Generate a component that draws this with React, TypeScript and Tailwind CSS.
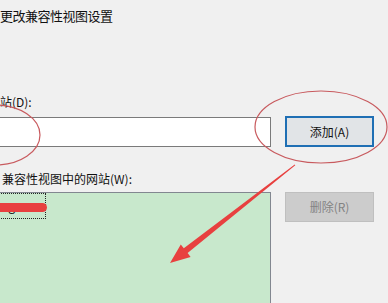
export default function App() {
  return (
    <div
      className="relative h-[303px] w-[388px] overflow-hidden bg-[#f0f0f0] text-[#111]"
      style={{ fontFamily: '"Noto Sans CJK SC", "Liberation Sans", sans-serif' }}
    >
      <div className="flex flex-col pt-[8px]">
        <div className="h-[16px] text-[13px] leading-[16px] tracking-[-0.5px]">更改兼容性视图设置</div>

        <div className="mt-[70px] h-[16px] text-[12px] leading-[16px]">站(D):</div>

        <div className="mt-[6px] flex items-start">
          <div className="ml-[-10px] mt-[1px] h-[30px] w-[281px] border border-[#7a7a7a] bg-white" />
          <button className="ml-[14px] h-[31px] w-[89px] border-2 border-[#1f6fb4] bg-[#e1e4e7] text-[12px] leading-none text-[#111]">
            添加(A)
          </button>
        </div>

        <div className="mt-[24px] h-[16px] pl-[2px] text-[12px] leading-[16px]">兼容性视图中的网站(W):</div>

        <div className="mt-[5px] flex items-start">
          <div className="ml-[-10px] h-[130px] w-[281px] border border-[#828790] bg-[#c8e8cc]">
            <div className="ml-[-1px] flex h-[26px] w-[56px] items-center justify-end border border-dotted border-[#222] pr-[30px] text-[12px] leading-none">
              img
            </div>
          </div>
          <button className="ml-[14px] h-[30px] w-[89px] border border-[#bfbfbf] bg-[#cccccc] text-[12px] leading-none text-[#838383]">
            删除(R)
          </button>
        </div>
      </div>

      {/* red annotations drawn over the dialog */}
      <svg className="pointer-events-none absolute inset-0" width="388" height="303" viewBox="0 0 388 303">
        <ellipse cx="-5" cy="135" rx="45" ry="30" fill="none" stroke="#c85a5e" strokeWidth="1.2" />
        <ellipse cx="321" cy="127" rx="66" ry="36" fill="none" stroke="#c85a5e" strokeWidth="1.2" />
        <rect x="-6" y="203" width="53" height="9" rx="4.5" fill="#e8403f" />
        <polygon
          points="294.7,164.6 295.3,165.3 187.6,253.1 190.6,257 170,263 180.8,244.4 183.8,248.3"
          fill="#e8403f"
        />
      </svg>
    </div>
  );
}
